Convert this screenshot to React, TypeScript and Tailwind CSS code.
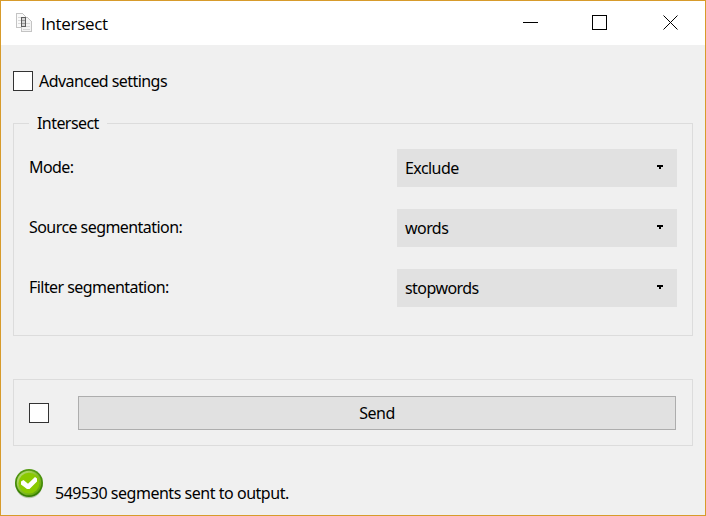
import React from "react";

function DocumentsIcon() {
  return (
    <svg width="16" height="20" viewBox="0 0 16 20" fill="none" shapeRendering="crispEdges">
      <path d="M.5 .5H6.5L9.5 3.5V14.5H.5Z" fill="#fafafa" stroke="#c4c4c4" />
      <path d="M2 4.5H5M2 7.5H5M2 10.5H5" stroke="#dadada" />
      <path d="M5.5 4.5H11.5L15.5 8.5V18.5H5.5Z" fill="#f3f3f3" stroke="#c4c4c4" />
      <path d="M7 10.5H14M7 13.5H14M7 16.5H14" stroke="#d5d5d5" />
      <path d="M5.5 4.5H9.5V13.5H5.5Z" fill="#d5d5d5" stroke="#5c5c5c" />
      <path d="M6 7.5H9M6 10.5H9" stroke="#9a9a9a" />
    </svg>
  );
}

function SuccessIcon() {
  return (
    <svg width="28" height="30" viewBox="0 0 28 30">
      <defs>
        <linearGradient id="rim" x1="0" y1="0" x2="0" y2="1">
          <stop offset="0" stopColor="#559b12" />
          <stop offset="1" stopColor="#347d00" />
        </linearGradient>
        <linearGradient id="ring" x1="0" y1="0" x2="1" y2="1">
          <stop offset="0" stopColor="#c6e58b" />
          <stop offset=".5" stopColor="#88bd2b" />
          <stop offset="1" stopColor="#58a000" />
        </linearGradient>
      </defs>
      <ellipse cx="14" cy="15.5" rx="13.5" ry="13.7" fill="#b5c5a5" />
      <circle cx="14" cy="14" r="14" fill="url(#rim)" />
      <circle cx="14" cy="14" r="12.3" fill="url(#ring)" />
      <circle cx="14" cy="14.2" r="10.4" fill="#8aca00" />
      <path d="M6 12.5L8.5 11L13 14.8L20 8L22 9.5V12.5L14.5 20H12L6 15.5Z" fill="#fff" />
    </svg>
  );
}

function Checkbox() {
  return <span className="block h-5 w-5 shrink-0 border border-[#333333] bg-white" />;
}

function Field({ label, value }: { label: string; value: string }) {
  return (
    <div className="flex h-[38px] items-center justify-between">
      <span className="mb-[2px]">{label}</span>
      <div className="flex h-full w-[280px] items-center justify-between bg-[#e1e1e1] pl-2 pr-[14px]">
        <span>{value}</span>
        <svg className="mb-[2px]" width="6" height="4" shapeRendering="crispEdges">
          <path d="M0 0H6V2H4V4H2V2H0Z" fill="#000" />
        </svg>
      </div>
    </div>
  );
}

export default function App() {
  return (
    <div className="flex h-[516px] w-[706px] flex-col border border-[#d79b2b] bg-[#f0f0f0] font-['Noto_Sans',sans-serif] text-[16px] leading-5 tracking-[-0.56px] whitespace-nowrap text-black">
      <header className="flex h-11 shrink-0 items-start bg-white pl-[15px]">
        <div className="mt-3">
          <DocumentsIcon />
        </div>
        <h1 className="mt-[13px] ml-[9px] font-['Open_Sans',sans-serif] text-[17px] tracking-[-0.3px]">Intersect</h1>
        <div className="mt-[14px] mr-[26px] ml-auto flex">
          <svg width="156" height="15" fill="none" stroke="#000">
            <path d="M0 7.5H15M69.5 .5H83.5V14.5H69.5Z" shapeRendering="crispEdges" />
            <path d="M140.5 .5L154.5 14.5M154.5 .5L140.5 14.5" />
          </svg>
        </div>
      </header>

      <main className="flex flex-col px-3">
        <label className="mt-[26px] flex h-5 items-center gap-[6px]">
          <Checkbox />
          <span>Advanced settings</span>
        </label>

        <fieldset className="mt-[22px] h-[223px] border border-[#dcdcdc] px-[15px] pt-[16px]">
          <legend className="h-5 px-2">Intersect</legend>
          <div className="flex flex-col gap-[22px]">
            <Field label="Mode:" value="Exclude" />
            <Field label="Source segmentation:" value="words" />
            <Field label="Filter segmentation:" value="stopwords" />
          </div>
        </fieldset>

        <section className="mt-[43px] flex h-[67px] items-center border border-[#dcdcdc] pr-4 pl-[15px]">
          <Checkbox />
          <button className="ml-[29px] h-[34px] flex-1 border border-[#adadad] bg-[#e1e1e1] tracking-[-0.5px]">Send</button>
        </section>

        <footer className="mt-[23px] flex items-start pl-[2px]">
          <SuccessIcon />
          <span className="mt-[14px] ml-3 tracking-[-0.47px]">549530 segments sent to output.</span>
        </footer>
      </main>
    </div>
  );
}
